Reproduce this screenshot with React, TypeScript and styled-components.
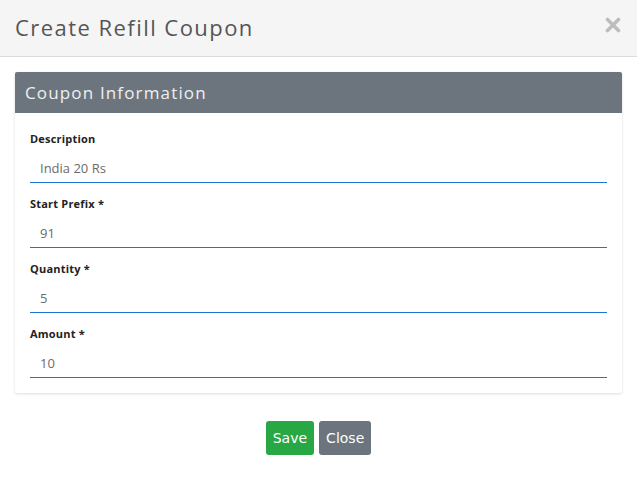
import React from "react";
import styled, { createGlobalStyle } from "styled-components";

const Global = createGlobalStyle`
  html, body { margin: 0; padding: 0; background: #fff; }
  body { font-family: "Open Sans", "DejaVu Sans", sans-serif; }
  * { box-sizing: border-box; }
`;

const Modal = styled.div`
  width: 637px;
  min-height: 484px;
  background: #fff;
  display: flex;
  flex-direction: column;
`;

const Header = styled.div`
  height: 57px;
  background: #f5f5f5;
  border-bottom: 1px solid #dcdcdc;
  display: flex;
  align-items: center;
  justify-content: space-between;
  padding: 0 15px 2px 15px;
`;

const Title = styled.h1`
  margin: 0;
  font-family: "Open Sans", sans-serif;
  font-weight: 400;
  font-size: 22px;
  letter-spacing: 1.45px;
  color: #555;
`;

const CloseX = styled.button`
  border: 0;
  background: transparent;
  padding: 0;
  margin: 0 0 4px 0;
  width: 18px;
  height: 18px;
  display: flex;
  align-items: center;
  justify-content: center;
  cursor: pointer;
`;

const Body = styled.div`
  padding: 15px;
`;

const Card = styled.div`
  background: #fff;
  border-radius: 2px;
  box-shadow: 0 1px 3px rgba(0, 0, 0, 0.14);
`;

const CardHeader = styled.div`
  height: 41px;
  background: #6c757d;
  color: #eef0f2;
  display: flex;
  align-items: center;
  padding: 0 10px 0 10px;
  font-family: "Open Sans", sans-serif;
  font-size: 17px;
  letter-spacing: 1.15px;
  font-weight: 400;
  border-radius: 2px 2px 0 0;
`;

const CardBody = styled.div`
  padding: 18px 15px 15px 15px;
  display: flex;
  flex-direction: column;
  gap: 13px;
`;

const Field = styled.div`
  display: flex;
  flex-direction: column;
`;

const Label = styled.label`
  font-family: "Open Sans", sans-serif;
  font-weight: 700;
  font-size: 11px;
  line-height: 16px;
  color: #222;
  margin-bottom: 4px;
  letter-spacing: 0.2px;
`;

const Input = styled.input`
  height: 32px;
  border: 0;
  border-bottom: 1px solid #1976d2;
  padding: 2px 10px 0 10px;
  font-family: "Open Sans", sans-serif;
  font-size: 13px;
  color: #6b6b6b;
  background: transparent;
  outline: none;
`;

const Footer = styled.div`
  display: flex;
  justify-content: center;
  gap: 5px;
  padding: 28px 0 0 0;
`;

const Button = styled.button<{ $variant: "success" | "secondary" }>`
  height: 34px;
  padding: 0 7px;
  border: 0;
  border-radius: 3px;
  font-family: "DejaVu Sans", sans-serif;
  font-size: 14px;
  color: #fff;
  background: ${(p) => (p.$variant === "success" ? "#28a745" : "#6c757d")};
  cursor: pointer;
`;

const fields = [
  { label: "Description", value: "India 20 Rs" },
  { label: "Start Prefix *", value: "91" },
  { label: "Quantity *", value: "5" },
  { label: "Amount *", value: "10" },
];

export default function App() {
  return (
    <>
      <Global />
      <Modal>
        <Header>
          <Title>Create Refill Coupon</Title>
          <CloseX aria-label="Close">
            <svg width="16" height="16" viewBox="0 0 16 16">
              <path d="M2.5 2.5 L13.5 13.5 M13.5 2.5 L2.5 13.5" stroke="#bdbdbd" strokeWidth="3.6" strokeLinecap="round" />
            </svg>
          </CloseX>
        </Header>
        <Body>
          <Card>
            <CardHeader>Coupon Information</CardHeader>
            <CardBody>
              {fields.map((f) => (
                <Field key={f.label}>
                  <Label>{f.label}</Label>
                  <Input defaultValue={f.value} />
                </Field>
              ))}
            </CardBody>
          </Card>
          <Footer>
            <Button $variant="success">Save</Button>
            <Button $variant="secondary">Close</Button>
          </Footer>
        </Body>
      </Modal>
    </>
  );
}
